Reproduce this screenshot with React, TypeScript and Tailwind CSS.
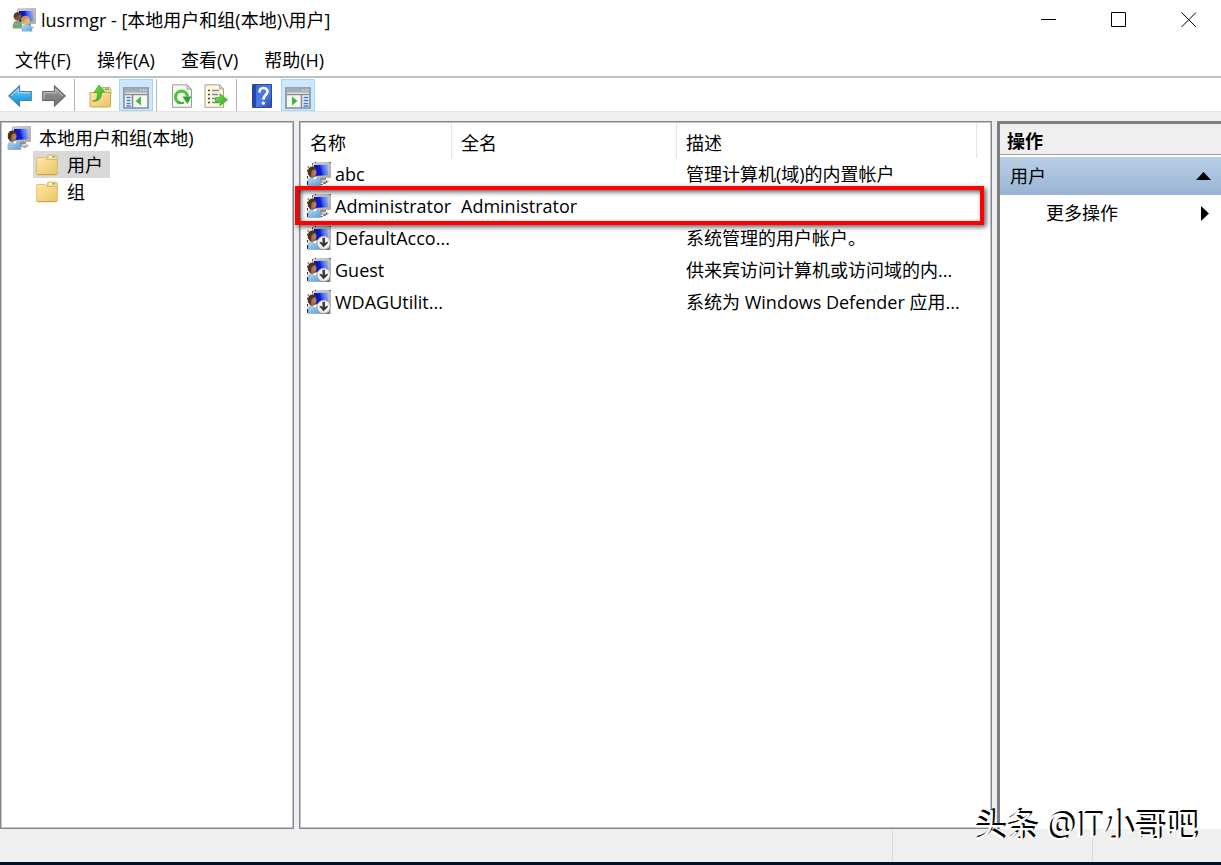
import React from "react";

interface UserAccount {
  name: string;
  label: string;
  fullName: string;
  description: string;
  disabled: boolean;
  marked?: boolean;
}

const USERS: UserAccount[] = [
  { name: "abc", label: "abc", fullName: "", description: "管理计算机(域)的内置帐户", disabled: false },
  { name: "Administrator", label: "Administrator", fullName: "Administrator", description: "", disabled: false, marked: true },
  { name: "DefaultAccount", label: "DefaultAcco...", fullName: "", description: "系统管理的用户帐户。", disabled: true },
  { name: "Guest", label: "Guest", fullName: "", description: "供来宾访问计算机或访问域的内...", disabled: true },
  { name: "WDAGUtilityAccount", label: "WDAGUtilit...", fullName: "", description: "系统为 Windows Defender 应用...", disabled: true },
];

const MENUS = ["文件(F)", "操作(A)", "查看(V)", "帮助(H)"];

// Gradients shared by every icon on the page
function IconDefs() {
  return (
    <svg width="0" height="0" className="absolute" aria-hidden="true">
      <defs>
        <linearGradient id="screen" x1="0" y1="0.2" x2="1" y2="0">
          <stop offset="0" stopColor="#0a0cc0" />
          <stop offset="0.4" stopColor="#1020d0" />
          <stop offset="0.55" stopColor="#3c60ea" />
          <stop offset="1" stopColor="#9db8fa" />
        </linearGradient>
        <linearGradient id="frame" x1="0" y1="0" x2="1" y2="1">
          <stop offset="0" stopColor="#dddbd2" />
          <stop offset="1" stopColor="#a8a8a6" />
        </linearGradient>
        <radialGradient id="face" cx="0.75" cy="0.55" r="0.7">
          <stop offset="0" stopColor="#c08a60" />
          <stop offset="1" stopColor="#6b4429" />
        </radialGradient>
        <linearGradient id="shirt" x1="0" y1="0" x2="1" y2="1">
          <stop offset="0" stopColor="#b4daf5" />
          <stop offset="1" stopColor="#5f9fd0" />
        </linearGradient>
        <linearGradient id="green" x1="0" y1="0" x2="1" y2="1">
          <stop offset="0" stopColor="#7fe04d" />
          <stop offset="1" stopColor="#1faf1c" />
        </linearGradient>
        <linearGradient id="folder" x1="0" y1="0" x2="1" y2="1">
          <stop offset="0" stopColor="#ffe9a6" />
          <stop offset="1" stopColor="#eac363" />
        </linearGradient>
        <linearGradient id="blueArrow" x1="0" y1="0" x2="0" y2="1">
          <stop offset="0" stopColor="#8fdcfb" />
          <stop offset="0.5" stopColor="#35aef0" />
          <stop offset="1" stopColor="#1583d2" />
        </linearGradient>
        <linearGradient id="grayArrow" x1="0" y1="0" x2="0" y2="1">
          <stop offset="0" stopColor="#b5b5b5" />
          <stop offset="0.5" stopColor="#858585" />
          <stop offset="1" stopColor="#777777" />
        </linearGradient>
        <linearGradient id="book" x1="0" y1="0" x2="1" y2="1">
          <stop offset="0" stopColor="#3a63d2" />
          <stop offset="0.6" stopColor="#4f7ee6" />
          <stop offset="1" stopColor="#2346a8" />
        </linearGradient>
      </defs>
    </svg>
  );
}

function Monitor() {
  return (
    <>
      <path d="M13 15h6v3l3 1.500-4 2.500-6-2z" fill="#8c8c8c" />
      <path d="M14 18.500l5-1 2 2-5 1.500z" fill="#d0d0d0" />
      <path d="M5.500 1L23.500.5V15.500L6 16z" fill="url(#frame)" stroke="#aaa" strokeWidth=".8" />
      <path d="M7 3l14-.3v10.600L7 14z" fill="url(#screen)" />
    </>
  );
}

function UserIcon({ disabled = false, edged = false }: { disabled?: boolean; edged?: boolean }) {
  return (
    <svg viewBox="0 0 24 24" className="h-6 w-6 shrink-0" aria-hidden="true">
      <Monitor />
      <path d="M1 23.500c-.6-5 .6-7.500 3.500-8.500h5c3 1.200 4.600 3.700 4.300 8.500z" fill="url(#shirt)" stroke="#6f9fc4" strokeWidth=".6" />
      <path d="M5 15l3 3L10 15z" fill="#eef8ff" />
      <ellipse cx="5.300" cy="10.300" rx="4.300" ry="5.500" fill="url(#face)" />
      <path d="M1 12.500C.2 7.500 2 4.500 5.300 4.500c2.700 0 4.300 1.600 4.200 3.500C7.500 7 5.500 7.500 4.500 9.500c-.4 1.500-.5 3.500-1.200 5z" fill="#50331f" />
      {edged && (
        <>
          <path d="M.5 5h1.500M.5 8v1.500M.5 14v2.500M.5 19v4M5 2.200h1M8 .5h1M22.500.5h1" stroke="#24242c" strokeWidth="1" fill="none" />
          {!disabled && <path d="M14 22.500h1.500M16.500 21h2M19 19.500h1" stroke="#3c3c40" strokeWidth="1" />}
        </>
      )}
      {disabled && (
        <>
          <path d="M22.500 15v8H14" stroke="#777" strokeWidth="1.800" fill="none" />
          <circle cx="16.700" cy="16.800" r="6.500" fill="#f2f2f2" stroke="#b5b5b5" strokeWidth=".8" />
          <path d="M16.700 11.800v7" stroke="#333" strokeWidth="2.400" />
          <path d="M12.300 16.500l4.400 4.800 4.400-4.800-1.200-.7-3.200 2-3.200-2z" fill="#333" />
        </>
      )}
    </svg>
  );
}

function GroupIcon() {
  return (
    <svg viewBox="0 0 24 24" className="h-6 w-6 shrink-0" aria-hidden="true">
      <Monitor />
      <path d="M.8 20.500C.3 15.500 2 13 5 12.500c4 .2 5.500 3 5.500 8z" fill="#7da873" />
      <circle cx="5.600" cy="8.600" r="4" fill="#83583a" />
      <path d="M1.800 9C1.500 5.500 3.500 4 6 4.200c2 .2 3 1.500 3 2.800-3-.3-4 .5-4.500 3z" fill="#573c29" />
      <path d="M9.500 23.500c-.5-4.500 1-6.800 4.500-7.300 4 .2 6.600 2.800 6.300 7.300z" fill="url(#shirt)" />
      <circle cx="13.600" cy="12.300" r="4.300" fill="#dfb57e" />
      <path d="M9.500 14c-1-4 1-6.300 4.200-6.300 2.800 0 4.300 1.500 4 3-3.200-.4-4.700.5-5.200 3z" fill="#c79a50" />
    </svg>
  );
}

function FolderIcon() {
  return (
    <svg viewBox="0 0 22 22" className="h-[22px] w-[22px] shrink-0" aria-hidden="true">
      <path d="M11 4l1-3h8.500l1 2v5H11z" fill="#f5d98b" stroke="#d6b25c" strokeWidth=".8" />
      <path d="M13.500 2h5v1.500h-5z" fill="#fff" />
      <path d="M16 2h3v1.500h-3z" fill="#5baee6" />
      <path d="M.7 4.500q0-1 1-1h7.500l1.300 2h10.800V20q0 .8-1 .8H1.700q-1 0-1-.8z" fill="url(#folder)" stroke="#d9b45b" strokeWidth=".8" />
      <path d="M1.500 20.500h19" stroke="#c79e45" strokeWidth=".8" />
    </svg>
  );
}

function BackIcon() {
  return (
    <svg viewBox="0 0 24 22" className="h-[22px] w-6" aria-hidden="true">
      <path d="M.8 11L11.500 1v5.500h11.700v9H11.500V21z" fill="url(#blueArrow)" stroke="#4a7fa5" strokeWidth="1.200" />
      <path d="M3 11l7.300-7v3.700H22" stroke="#a9e3fb" fill="none" />
    </svg>
  );
}

function ForwardIcon() {
  return (
    <svg viewBox="0 0 24 22" className="h-[22px] w-6" aria-hidden="true">
      <path d="M23.200 11L12.500 1v5.500H.8v9h11.700V21z" fill="url(#grayArrow)" stroke="#666" strokeWidth="1.200" />
      <path d="M2 14V7.700h11.700V4l7.300 7" stroke="#c4c4c4" fill="none" />
    </svg>
  );
}

function UpFolderIcon() {
  return (
    <svg viewBox="0 0 24 24" className="h-6 w-6" aria-hidden="true">
      <path d="M13 6l1-2.500h8l1 2V10H13z" fill="#f5d98b" stroke="#c9a145" strokeWidth=".8" />
      <path d="M17 4.500h4V6h-4z" fill="#4fa3e0" />
      <path d="M2 8.500h20.500V22q0 1-1 1H3q-1 0-1-1z" fill="url(#folder)" stroke="#c9a145" strokeWidth=".9" />
      <path d="M4.500 17c4.500 0 5-3.500 5-8.500H6L11 1l5.500 6.500-3 .5c.3 6-2.500 10-9 9z" fill="url(#green)" stroke="#3c9b25" strokeWidth=".7" />
    </svg>
  );
}

// Console window with a tree pane on the left or an action pane on the right
function PaneIcon({ side }: { side: "left" | "right" }) {
  const left = side === "left";
  return (
    <svg viewBox="0 0 26 22" className="mt-1 h-[22px] w-[26px]" aria-hidden="true">
      <path d="M1 1h24v20H1z" fill="#f4f6f7" stroke="#848b93" strokeWidth="1.600" />
      <path d="M1.500 1.500h23v3h-23z" fill="#a4abb3" />
      <path d="M2 5h22M2 7.700h22" stroke="#858c96" strokeWidth="1.200" />
      <path d="M2 5.800h22v1.200H2z" fill="#d8dde2" />
      <path d="M17 3h1.500M20 3h1.500M22.500 3h1" stroke="#eef" />
      <path d={left ? "M9.500 8v13" : "M16.500 8v13"} stroke="#848b93" strokeWidth="1.600" />
      <path d={left ? "M3.500 10.500h4M3.500 13.500h4M3.500 16.500h4M3.500 19h4" : "M18.500 10.500h5M18.500 13.500h5M18.500 16.500h5M18.500 19h5"} stroke="#3e7ed0" strokeWidth="1.400" />
      <path d={left ? "M18 9.500v9L12.500 14z" : "M7 9.500v9L12.500 14z"} fill="#43bb2f" />
    </svg>
  );
}

function RefreshIcon() {
  return (
    <svg viewBox="0 0 22 24" className="h-6 w-[22px]" aria-hidden="true">
      <path d="M1.500.8H16l4.500 4.500v18h-19z" fill="#f7f7f5" stroke="#9b9b9b" />
      <path d="M16 .8v4.500h4.500z" fill="#d8d8d8" stroke="#9b9b9b" strokeWidth=".8" />
      <path d="M9.500 19a6 6 0 1 1 7-6.500" fill="none" stroke="#4fc43d" strokeWidth="3.200" />
      <path d="M11.500 12.500h8.800L16.500 20z" fill="#25a62a" />
      <path d="M7 18q3 1.800 6 .6" fill="none" stroke="#36ad32" strokeWidth="1.800" />
    </svg>
  );
}

function ExportIcon() {
  return (
    <svg viewBox="0 0 24 24" className="h-6 w-6" aria-hidden="true">
      <path d="M1 .8h14.500L19.500 5v18.300H1z" fill="#fdf8df" stroke="#a8a48e" />
      <path d="M15.500.8V5h4z" fill="#dedac4" stroke="#a8a48e" strokeWidth=".8" />
      <path d="M4 6.500h2M4 10.500h2M4 14.500h2M4 18.500h2" stroke="#444" strokeWidth="1.500" />
      <path d="M8 6.500h7M8 10.500h6M8 14.500h4M8 18.500h7" stroke="#8685a0" strokeWidth="1.400" />
      <path d="M11.500 13.500H16V9.800l7.500 6-7.500 6V18h-4.500z" fill="url(#green)" stroke="#46a92e" strokeWidth=".8" />
    </svg>
  );
}

function HelpIcon() {
  return (
    <svg viewBox="0 0 20 24" className="h-6 w-5" aria-hidden="true">
      <path d="M.5.500h19v23H.5z" fill="url(#book)" stroke="#2b469b" />
      <path d="M1 1h3v22H1z" fill="#2446aa" />
      <path d="M7.500 8.500C7.500 2.500 15.500 3 15.500 7.500c0 3.500-4 3.500-4 8" fill="none" stroke="#fff" strokeWidth="2.600" />
      <circle cx="11.400" cy="19.200" r="1.600" fill="#fff" />
    </svg>
  );
}

function ToolButton({ label, active = false, children }: { label: string; active?: boolean; children: React.ReactNode }) {
  return (
    <button
      type="button"
      aria-label={label}
      className={`flex h-8 w-[34px] items-center justify-center border pt-0.5 ${
        active ? "border-[#a5d5fb] bg-[#cce8ff]" : "border-transparent hover:bg-[#e5f3ff]"
      }`}
    >
      {children}
    </button>
  );
}

function Separator() {
  return <div className="mr-1 ml-[3px] h-8 w-px bg-[#b4b4b4]" />;
}

function TitleBar() {
  return (
    <header className="flex h-10 items-center justify-between">
      <div className="flex items-center gap-[5px] pl-3">
        <GroupIcon />
        <h1 className="text-lg">lusrmgr - [本地用户和组(本地)\用户]</h1>
      </div>
      <div className="flex h-full">
        <button type="button" aria-label="最小化" className="flex w-[70px] items-center justify-center pl-1.5">
          <svg viewBox="0 0 16 16" className="h-4 w-4"><path d="M0 7.500h15" stroke="#000" /></svg>
        </button>
        <button type="button" aria-label="最大化" className="flex w-[70px] items-center justify-center pl-1.5">
          <svg viewBox="0 0 16 16" className="h-4 w-4"><path d="M.5.500h14v14H.5z" fill="none" stroke="#000" /></svg>
        </button>
        <button type="button" aria-label="关闭" className="flex w-[70px] items-center justify-center pl-1.5">
          <svg viewBox="0 0 16 16" className="h-4 w-4"><path d="M.5.500l14.500 14.500M15 .5L.5 15" stroke="#000" /></svg>
        </button>
      </div>
    </header>
  );
}

function Toolbar() {
  return (
    <div role="toolbar" className="flex items-center border-t-2 border-[#c0c0c0] border-b border-b-[#e3e3e3] bg-white pt-px pl-[3px]">
      <ToolButton label="后退"><BackIcon /></ToolButton>
      <ToolButton label="前进"><ForwardIcon /></ToolButton>
      <Separator />
      <div className="flex gap-0.5 pl-1">
        <ToolButton label="上一级"><UpFolderIcon /></ToolButton>
        <ToolButton label="显示/隐藏控制台树" active><PaneIcon side="left" /></ToolButton>
      </div>
      <Separator />
      <div className="flex pl-1">
        <ToolButton label="刷新"><RefreshIcon /></ToolButton>
        <ToolButton label="导出列表"><ExportIcon /></ToolButton>
      </div>
      <Separator />
      <div className="flex gap-0.5 pl-1">
        <ToolButton label="帮助"><HelpIcon /></ToolButton>
        <ToolButton label="显示/隐藏操作窗格" active><PaneIcon side="right" /></ToolButton>
      </div>
    </div>
  );
}

function ConsoleTree() {
  return (
    <nav className="w-[294px] shrink-0 border border-[#828790] bg-white pt-0.5 pl-1.5 shadow-[inset_0_0_0_1px_#c0c4ca]">
      <div className="flex h-[27px] items-center gap-2">
        <UserIcon />
        <span>本地用户和组(本地)</span>
      </div>
      <ul className="pl-[26px]">
        <li>
          <button type="button" aria-current="true" className="flex h-[27px] items-center gap-[9px] bg-[#d9d9d9] pr-[7px] pl-[3px]">
            <FolderIcon />
            用户
          </button>
        </li>
        <li>
          <button type="button" className="flex h-[27px] items-center gap-[9px] pr-[7px] pl-[3px]">
            <FolderIcon />
            组
          </button>
        </li>
      </ul>
    </nav>
  );
}

function UserTable() {
  return (
    <main className="min-w-0 flex-1 border border-[#828790] bg-white p-px shadow-[inset_0_0_0_1px_#c0c4ca]">
      <table className="w-full table-fixed border-separate border-spacing-0 text-left">
        <colgroup>
          <col className="w-[151px]" />
          <col className="w-[225px]" />
          <col />
          <col className="w-[13px]" />
        </colgroup>
        <thead>
          <tr className="h-[35px]">
            <th className="border-r border-[#e5e5e5] pt-1 pl-[9px] font-normal">名称</th>
            <th className="border-r border-[#e5e5e5] pt-1 pl-[9px] font-normal">全名</th>
            <th className="border-r border-[#e5e5e5] pt-1 pl-[9px] font-normal">描述</th>
            <td />
          </tr>
        </thead>
        <tbody>
          {USERS.map((user) => (
            <tr key={user.name} className="relative h-8">
              <td className="p-0 pl-1.5">
                <div className="flex items-center gap-1 whitespace-nowrap" title={user.name}>
                  <UserIcon disabled={user.disabled} edged />
                  {user.label}
                </div>
                {user.marked && (
                  <div className="pointer-events-none absolute -top-1 right-[6px] -bottom-[3px] -left-[6px] z-10 border-4 border-[#fe0000] shadow-[2px_2px_5px_rgba(0,0,0,0.65),inset_2px_2px_5px_rgba(0,0,0,0.65)]" />
                )}
              </td>
              <td className="p-0 pl-[9px]">{user.fullName}</td>
              <td className="p-0 pl-[9px] whitespace-nowrap">{user.description}</td>
              <td />
            </tr>
          ))}
        </tbody>
      </table>
    </main>
  );
}

function ActionsPane() {
  return (
    <aside className="w-[224px] shrink-0 border-t-[3px] border-l-[3px] border-[#7d7f82] bg-white">
      <h2 className="flex h-[31px] items-center border-b border-[#a0a0a0] bg-[#efefef] pt-1 pl-[7px] font-bold">操作</h2>
      <button type="button" className="mt-0.5 flex h-[38px] w-full items-center justify-between bg-gradient-to-b from-[#bad0e9] to-[#98b3d2] px-[10px]">
        用户
        <svg viewBox="0 0 15 8" className="h-2 w-[15px]" aria-hidden="true"><path d="M0 8L7.500 0 15 8z" /></svg>
      </button>
      <button type="button" className="flex h-9 w-full items-center justify-between pr-3 pl-[46px]">
        更多操作
        <svg viewBox="0 0 8 15" className="h-[15px] w-2" aria-hidden="true"><path d="M0 0l8 7.500L0 15z" /></svg>
      </button>
    </aside>
  );
}

export default function App() {
  return (
    <div className="relative flex min-h-screen flex-col bg-[#efefef] font-['Open_Sans','Noto_Sans_CJK_SC',sans-serif] text-lg leading-6 text-black">
      <IconDefs />
      <div className="bg-white">
        <TitleBar />
        <div role="menubar" className="flex h-9 items-center gap-[26px] pt-1 pl-[15px]">
          {MENUS.map((menu) => (
            <button key={menu} type="button" role="menuitem">{menu}</button>
          ))}
        </div>
        <Toolbar />
      </div>
      <div className="flex flex-1 gap-[5px] pt-[9px]">
        <ConsoleTree />
        <UserTable />
        <ActionsPane />
      </div>
      <footer className="flex h-9 justify-end border-b-[3px] border-[#00102a]">
        <div className="w-[200px] border-l border-[#dcdcdc]" />
        <div className="w-[129px] border-l border-[#dcdcdc]" />
      </footer>
      <div className="pointer-events-none absolute right-6 bottom-5 text-[32px] leading-10 text-white [text-shadow:1px_-1px_0_#000,2px_-2px_0_#000]">
        头条 @IT小哥吧
      </div>
    </div>
  );
}
